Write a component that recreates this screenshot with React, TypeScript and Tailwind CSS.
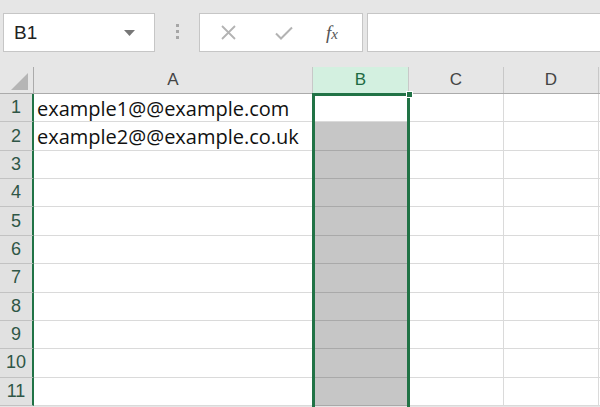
import React from "react";

const ROWS = [
  "example1@@example.com",
  "example2@@example.co.uk",
  "", "", "", "", "", "", "", "", "",
];

const GREEN = "#217346";

function NameBox() {
  return (
    <div className="ml-[3px] w-[152px] h-[39px] bg-white border border-[#c6c6c6] flex items-center justify-between pl-[10px] pr-[19px]">
      <span className="text-[19px] text-[#222] leading-none">B1</span>
      <svg width="11" height="6" viewBox="0 0 11 6">
        <polygon points="0,0 11,0 5.5,6" fill="#777" />
      </svg>
    </div>
  );
}

function FormulaButtons() {
  return (
    <div className="ml-[20px] w-[164px] h-[39px] bg-white border border-[#c6c6c6] flex items-center">
      <svg className="ml-[21px]" width="15" height="15" viewBox="0 0 15 15">
        <path d="M1 1 L14 14 M14 1 L1 14" stroke="#b3b3b3" strokeWidth="1.8" />
      </svg>
      <svg className="ml-[39px]" width="18" height="14" viewBox="0 0 18 14">
        <path d="M1 7.5 L6 12.5 L17 1.5" stroke="#b3b3b3" strokeWidth="2" fill="none" />
      </svg>
      <span
        className="ml-[33px] text-[19px] italic text-[#555] leading-none"
        style={{ fontFamily: '"Liberation Serif", serif' }}
      >
        f<span className="text-[15px]">x</span>
      </span>
    </div>
  );
}

export default function App() {
  return (
    <div
      className="relative w-[600px] h-[407px] overflow-hidden bg-[#e6e6e6] text-[#444]"
      style={{ fontFamily: '"Liberation Sans", Arial, sans-serif' }}
    >
      {/* Formula bar */}
      <div className="h-[67px] pt-[13px] flex items-start">
        <NameBox />
        <div className="ml-[21px] mt-[11px] flex flex-col gap-[3px]">
          <span className="block w-[3px] h-[3px] bg-[#a6a6a6]" />
          <span className="block w-[3px] h-[3px] bg-[#a6a6a6]" />
          <span className="block w-[3px] h-[3px] bg-[#a6a6a6]" />
        </div>
        <FormulaButtons />
        <div className="ml-[4px] flex-1 h-[39px] bg-white border border-[#c6c6c6] -mr-[4px]" />
      </div>

      {/* Column headers */}
      <div className="flex h-[27px] border-b border-[#ababab] text-[17px]">
        <div className="w-[34px] border-r border-[#ababab] relative">
          <svg className="absolute left-0 top-0" width="34" height="27" viewBox="0 0 34 27">
            <polygon points="11,23 28,23 28,6" fill="#b5b5b5" />
          </svg>
        </div>
        <div className="w-[279px] border-r border-[#c8c8c8] flex items-center justify-center">A</div>
        <div className="w-[96px] bg-[#d3f0e0] border-r border-[#c8c8c8] flex items-center justify-center text-[#1e6b43]">B</div>
        <div className="w-[95px] border-r border-[#c8c8c8] flex items-center justify-center">C</div>
        <div className="w-[95px] border-r border-[#c8c8c8] flex items-center justify-center">D</div>
        <div className="flex-1" />
      </div>

      {/* Rows */}
      <div className="flex flex-col bg-white">
        {ROWS.map((text, i) => (
          <div key={i} className="flex h-[28.36px]">
            <div className="w-[34px] bg-[#e1e1e1] border-b border-[#c2c2c2] border-r-[2px] border-r-[#217346] flex items-center justify-center text-[18px] text-[#2f5646]">
              {i + 1}
            </div>
            <div
              className="w-[279px] border-b border-r border-[#dadada] flex items-center pl-[3px] pt-[2px] text-[20px] text-[#111] whitespace-nowrap"
              style={{ fontFamily: '"Open Sans", sans-serif' }}
            >
              {text}
            </div>
            <div
              className={
                i === 0
                  ? "w-[96px] bg-white border-b border-[#dadada]"
                  : "w-[96px] bg-[#c6c6c6] border-b border-[#a9a9a9]"
              }
            />
            <div className="w-[95px] border-b border-r border-[#dadada]" />
            <div className="w-[95px] border-b border-r border-[#dadada]" />
            <div className="flex-1 border-b border-[#dadada]" />
          </div>
        ))}
      </div>

      {/* Selection outline on column B */}
      <div
        className="absolute left-[312px] top-[93px] w-[98px] h-[330px] border-[3px]"
        style={{ borderColor: GREEN }}
      />
      {/* Fill handle */}
      <div
        className="absolute left-[406px] top-[91px] w-[7px] h-[7px] border border-white"
        style={{ backgroundColor: GREEN }}
      />
    </div>
  );
}
